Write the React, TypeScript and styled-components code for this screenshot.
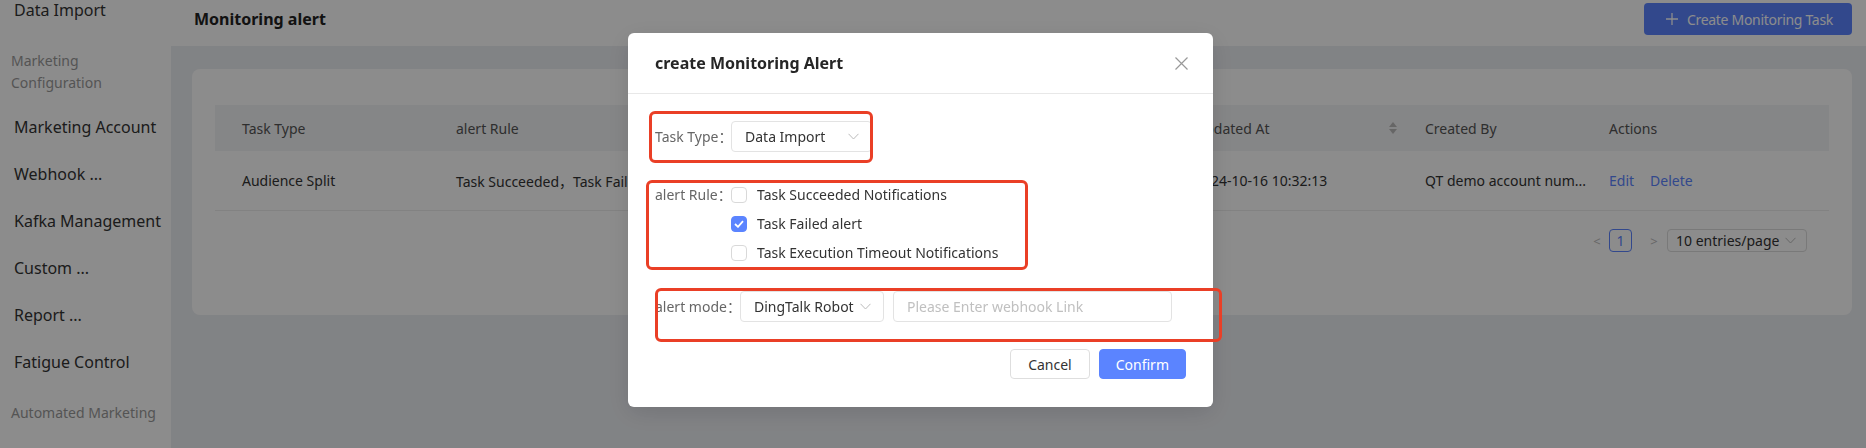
import React from 'react';
import styled, { createGlobalStyle } from 'styled-components';

const PRIMARY = '#5b84ff';

const GlobalStyle = createGlobalStyle`
  html, body {
    margin: 0;
    padding: 0;
  }
  body {
    font-family: 'Noto Sans', 'Noto Sans CJK SC', 'Liberation Sans', sans-serif;
    font-size: 14px;
    color: #333;
    overflow: hidden;
  }
  * {
    box-sizing: border-box;
  }
`;

const Page = styled.div`
  display: flex;
  width: 1866px;
  height: 448px;
  overflow: hidden;
  position: relative;
`;

/* ---------- sidebar ---------- */

const Sidebar = styled.aside`
  width: 171px;
  flex: none;
  background: #fff;
  overflow: hidden;
`;

const MenuList = styled.nav`
  display: flex;
  flex-direction: column;
  margin-top: -13px;
`;

const MenuItem = styled.div`
  height: 47px;
  line-height: 47px;
  padding-left: 14px;
  font-size: 16px;
  color: #333;
  white-space: nowrap;
`;

const MenuGroup = styled.div`
  padding: 16px 8px 10px 11px;
  font-size: 14px;
  line-height: 22px;
  color: #9a9a9a;
`;

/* ---------- main ---------- */

const Main = styled.main`
  flex: 1;
  display: flex;
  flex-direction: column;
  background: #eceef3;
`;

const TopBar = styled.header`
  height: 46px;
  flex: none;
  display: flex;
  justify-content: space-between;
  align-items: flex-start;
  padding: 3px 14px 0 23px;
  background: #fff;
`;

const PageTitle = styled.h1`
  margin: 0;
  font-size: 16px;
  font-weight: 700;
  line-height: 32px;
  color: #222;
`;

const CreateButton = styled.button`
  height: 32px;
  display: flex;
  align-items: center;
  gap: 9px;
  padding: 0 19px 0 22px;
  border: 0;
  border-radius: 4px;
  background: ${PRIMARY};
  color: #fff;
  font-family: inherit;
  font-size: 14px;
  letter-spacing: -0.3px;
`;

const Content = styled.section`
  padding: 23px 14px 0 21px;
`;

const Card = styled.div`
  background: #fff;
  border-radius: 8px;
  padding: 36px 23px 63px;
`;

const TableRow = styled.div<{ $head?: boolean }>`
  display: grid;
  grid-template-columns: 214px 739px 230px 184px 1fr;
  align-items: center;
  height: ${(p) => (p.$head ? '46px' : '60px')};
  background: ${(p) => (p.$head ? '#f3f4f6' : '#fff')};
  border-bottom: ${(p) => (p.$head ? '0' : '1px solid #ededed')};
  color: ${(p) => (p.$head ? '#555' : '#333')};
`;

const Cell = styled.div`
  padding-left: 27px;
  white-space: nowrap;
  display: flex;
  align-items: center;
  justify-content: space-between;
`;

const SortIcon = styled.span`
  display: inline-flex;
  flex-direction: column;
  gap: 2px;
  margin-right: 1px;
  &::before,
  &::after {
    content: '';
    border-left: 4px solid transparent;
    border-right: 4px solid transparent;
  }
  &::before {
    border-bottom: 5px solid #bbb;
  }
  &::after {
    border-top: 5px solid #bbb;
  }
`;

const LinkText = styled.span`
  color: ${PRIMARY};
  margin-right: 16px;
`;

const Pager = styled.div`
  display: flex;
  justify-content: flex-end;
  align-items: center;
  margin-top: 18px;
  padding-right: 22px;
  height: 23px;
`;

const PagerArrow = styled.span`
  color: #bbb;
  font-size: 13px;
  width: 12px;
  text-align: center;
`;

const PageNumber = styled.span`
  width: 23px;
  height: 23px;
  margin: 0 16px 0 6px;
  border: 1px solid ${PRIMARY};
  border-radius: 4px;
  color: ${PRIMARY};
  display: flex;
  align-items: center;
  justify-content: center;
`;

const PageSize = styled.div`
  width: 140px;
  height: 23px;
  margin-left: 7px;
  border: 1px solid #dcdcdc;
  border-radius: 4px;
  display: flex;
  align-items: center;
  justify-content: space-between;
  padding: 0 10px 0 8px;
  color: #333;
`;

/* ---------- modal ---------- */

const Mask = styled.div`
  position: fixed;
  inset: 0;
  background: rgba(0, 0, 0, 0.45);
`;

const Modal = styled.div`
  position: absolute;
  left: 628px;
  top: 33px;
  width: 585px;
  background: #fff;
  border-radius: 6px;
  box-shadow: 0 6px 24px rgba(0, 0, 0, 0.12);
`;

const ModalHeader = styled.div`
  height: 61px;
  display: flex;
  align-items: center;
  justify-content: space-between;
  padding: 0 25px 0 27px;
  border-bottom: 1px solid #e8e8e8;
`;

const ModalTitle = styled.div`
  font-size: 16px;
  font-weight: 700;
  color: #262626;
`;

const ModalBody = styled.div`
  display: flex;
  flex-direction: column;
  padding: 27px 27px 0;
`;

const FormRow = styled.div<{ $gap: number }>`
  display: flex;
  align-items: flex-start;
  margin-bottom: ${(p) => p.$gap}px;
`;

const FormLabel = styled.label<{ $width: number; $line?: number }>`
  flex: none;
  width: ${(p) => p.$width}px;
  line-height: ${(p) => p.$line ?? 31}px;
  color: #666;
  white-space: nowrap;
  font-family: 'Noto Sans', 'Noto Sans CJK SC', sans-serif;
`;

const Select = styled.div<{ $width: number }>`
  width: ${(p) => p.$width}px;
  height: 31px;
  display: flex;
  align-items: center;
  justify-content: space-between;
  padding: 0 12px 0 13px;
  border: 1px solid #e3e3e3;
  border-radius: 4px;
  color: #333;
  white-space: nowrap;
`;

const Input = styled.input`
  width: 279px;
  height: 31px;
  margin-left: 9px;
  padding: 0 13px;
  border: 1px solid #e3e3e3;
  border-radius: 4px;
  font-family: inherit;
  font-size: 14px;
  color: #333;
  outline: none;
  &::placeholder {
    color: #c0c0c0;
  }
`;

const CheckList = styled.div`
  display: flex;
  flex-direction: column;
`;

const CheckRow = styled.div`
  height: 29px;
  display: flex;
  align-items: center;
  gap: 10px;
  color: #333;
`;

const CheckBox = styled.span<{ $checked?: boolean }>`
  width: 16px;
  height: 16px;
  flex: none;
  border-radius: 4px;
  border: 1px solid ${(p) => (p.$checked ? PRIMARY : '#d9d9d9')};
  background: ${(p) => (p.$checked ? PRIMARY : '#fff')};
  display: flex;
  align-items: center;
  justify-content: center;
`;

const ModalFooter = styled.div`
  display: flex;
  justify-content: flex-end;
  gap: 9px;
  padding: 27px 27px 28px;
`;

const FooterButton = styled.button<{ $primary?: boolean }>`
  height: 30px;
  padding: 0 ${(p) => (p.$primary ? 16 : 17)}px;
  border-radius: 4px;
  border: 1px solid ${(p) => (p.$primary ? PRIMARY : '#dedede')};
  background: ${(p) => (p.$primary ? PRIMARY : '#fff')};
  color: ${(p) => (p.$primary ? '#fff' : '#333')};
  font-family: inherit;
  font-size: 14px;
`;

const CloseButton = styled.span`
  display: flex;
`;

const Highlight = styled.div<{ $x: number; $y: number; $w: number; $h: number }>`
  position: absolute;
  left: ${(p) => p.$x}px;
  top: ${(p) => p.$y}px;
  width: ${(p) => p.$w}px;
  height: ${(p) => p.$h}px;
  border: 3px solid #ea3f26;
  border-radius: 6px;
  pointer-events: none;
`;

function Chevron({ color = '#bbb' }: { color?: string }) {
  return (
    <svg width="11" height="7" viewBox="0 0 11 7" fill="none">
      <path d="M0.5 0.8 L5.5 6 L10.5 0.8" stroke={color} strokeWidth="1" />
    </svg>
  );
}

function Check() {
  return (
    <svg width="10" height="8" viewBox="0 0 10 8" fill="none">
      <path d="M1 4 L4 6.8 L9 1.2" stroke="#fff" strokeWidth="1.8" />
    </svg>
  );
}

function CloseIcon() {
  return (
    <svg width="13" height="13" viewBox="0 0 13 13" fill="none">
      <path d="M0.5 0.5 L12.5 12.5 M12.5 0.5 L0.5 12.5" stroke="#999" strokeWidth="1.2" />
    </svg>
  );
}

function PlusIcon() {
  return (
    <svg width="12" height="12" viewBox="0 0 12 12" fill="none">
      <path d="M6 0 V12 M0 6 H12" stroke="#fff" strokeWidth="1.3" />
    </svg>
  );
}

const menu = [
  { group: false, text: 'Data Import' },
  { group: true, text: 'Marketing Configuration' },
  { group: false, text: 'Marketing Account' },
  { group: false, text: 'Webhook ...' },
  { group: false, text: 'Kafka Management' },
  { group: false, text: 'Custom ...' },
  { group: false, text: 'Report ...' },
  { group: false, text: 'Fatigue Control' },
  { group: true, text: 'Automated Marketing' },
];

const rules = [
  { label: 'Task Succeeded Notifications', checked: false },
  { label: 'Task Failed alert', checked: true },
  { label: 'Task Execution Timeout Notifications', checked: false },
];

export default function App() {
  return (
    <Page>
      <GlobalStyle />
      <Sidebar>
        <MenuList>
          {menu.map((m) =>
            m.group ? (
              <MenuGroup key={m.text}>{m.text}</MenuGroup>
            ) : (
              <MenuItem key={m.text}>{m.text}</MenuItem>
            )
          )}
        </MenuList>
      </Sidebar>

      <Main>
        <TopBar>
          <PageTitle>Monitoring alert</PageTitle>
          <CreateButton>
            <PlusIcon />
            Create Monitoring Task
          </CreateButton>
        </TopBar>
        <Content>
          <Card>
            <TableRow $head>
              <Cell>Task Type</Cell>
              <Cell>alert Rule</Cell>
              <Cell>
                Updated At
                <SortIcon />
              </Cell>
              <Cell>Created By</Cell>
              <Cell>Actions</Cell>
            </TableRow>
            <TableRow>
              <Cell>Audience Split</Cell>
              <Cell>Task Succeeded，Task Failed alert</Cell>
              <Cell>2024-10-16 10:32:13</Cell>
              <Cell>QT demo account num...</Cell>
              <Cell>
                <span>
                  <LinkText>Edit</LinkText>
                  <LinkText>Delete</LinkText>
                </span>
              </Cell>
            </TableRow>
            <Pager>
              <PagerArrow>&lt;</PagerArrow>
              <PageNumber>1</PageNumber>
              <PagerArrow>&gt;</PagerArrow>
              <PageSize>
                10 entries/page
                <Chevron />
              </PageSize>
            </Pager>
          </Card>
        </Content>
      </Main>

      <Mask>
        <Modal>
          <ModalHeader>
            <ModalTitle>create Monitoring Alert</ModalTitle>
            <CloseButton>
              <CloseIcon />
            </CloseButton>
          </ModalHeader>
          <ModalBody>
            <FormRow $gap={28}>
              <FormLabel $width={76}>Task Type：</FormLabel>
              <Select $width={141}>
                Data Import
                <Chevron />
              </Select>
            </FormRow>
            <FormRow $gap={24}>
              <FormLabel $width={76} $line={29}>
                alert Rule：
              </FormLabel>
              <CheckList>
                {rules.map((r) => (
                  <CheckRow key={r.label}>
                    <CheckBox $checked={r.checked}>{r.checked && <Check />}</CheckBox>
                    {r.label}
                  </CheckRow>
                ))}
              </CheckList>
            </FormRow>
            <FormRow $gap={0}>
              <FormLabel $width={85}>alert mode：</FormLabel>
              <Select $width={144}>
                DingTalk Robot
                <Chevron />
              </Select>
              <Input placeholder="Please Enter webhook Link" />
            </FormRow>
          </ModalBody>
          <ModalFooter>
            <FooterButton>Cancel</FooterButton>
            <FooterButton $primary>Confirm</FooterButton>
          </ModalFooter>

          <Highlight $x={21} $y={78} $w={224} $h={52} />
          <Highlight $x={18} $y={147} $w={382} $h={90} />
          <Highlight $x={27} $y={255} $w={567} $h={54} />
        </Modal>
      </Mask>
    </Page>
  );
}
